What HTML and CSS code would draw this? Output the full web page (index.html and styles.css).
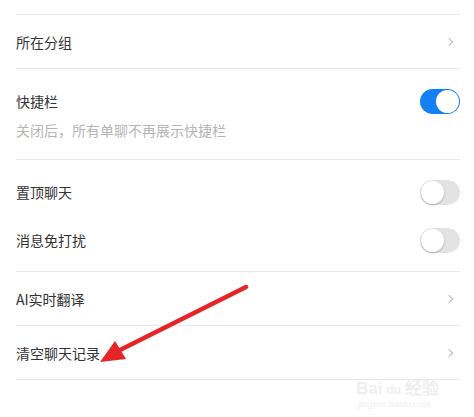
FILE: index.html
```html
<!DOCTYPE html>
<html lang="zh-CN">
	<head>
		<title>聊天设置</title>
		<link rel="stylesheet" href="styles.css">
	</head>
	<body>
		<div id="main">
			<div class="top"></div>
			<div class="row">
				<span class="label">所在分组</span>
				<span class="chev"></span>
			</div>
			<div class="block quick">
				<div class="line">
					<span class="label">快捷栏</span>
					<span class="switch on"></span>
				</div>
				<div class="note">关闭后，所有单聊不再展示快捷栏</div>
			</div>
			<div class="block pair">
				<div class="line tall">
					<span class="label">置顶聊天</span>
					<span class="switch"></span>
				</div>
				<div class="line tall">
					<span class="label">消息免打扰</span>
					<span class="switch"></span>
				</div>
			</div>
			<div class="row">
				<span class="label">AI实时翻译</span>
				<span class="chev"></span>
			</div>
			<div class="row">
				<span class="label">清空聊天记录</span>
				<span class="chev"></span>
			</div>
		</div>

		<!-- red arrow drawn over the screenshot -->
		<svg class="arrow" width="474" height="417" viewBox="0 0 474 417">
			<line x1="246" y1="287" x2="114" y2="353" stroke="#e5252a" stroke-width="4.5" stroke-linecap="round"/>
			<polygon points="100,362 115,341 126,359" fill="#e5252a"/>
		</svg>

		<div class="mark">
			<div class="mark-big">Bai<span class="du">du</span>经验</div>
			<div class="mark-small">jingyan.baidu.com</div>
		</div>
	</body>
</html>
```

FILE: styles.css
```css
body, html {
	margin:0;
	padding:0;
	background:#fff;
	font-family:"Noto Sans CJK SC","Noto Sans",sans-serif;
	color:#333;
}
#main {
	padding:0 14px 0 16px;
}
.top {
	height:14px;
	border-bottom:1px solid #e9e9e9;
}
.row {
	display:flex;
	align-items:center;
	justify-content:space-between;
	height:53px;
	border-bottom:1px solid #e9e9e9;
}
.label {
	font-size:14px;
	line-height:20px;
}
.chev {
	width:5px;
	height:5px;
	border-top:1px solid #bbb;
	border-right:1px solid #bbb;
	transform:rotate(45deg);
	margin-right:8px;
}
.block {
	border-bottom:1px solid #e9e9e9;
}
.quick {
	height:91px;
	box-sizing:border-box;
	padding-top:20px;
}
.line {
	display:flex;
	align-items:center;
	justify-content:space-between;
	height:24px;
}
.note {
	margin-top:7px;
	font-size:14px;
	line-height:20px;
	color:#b5b5b5;
}
.pair {
	height:112px;
	box-sizing:border-box;
	padding-top:8px;
}
.line.tall {
	height:48px;
}
.switch {
	position:relative;
	width:40px;
	height:25px;
	border-radius:13px;
	background:#e3e3e3;
	box-sizing:border-box;
}
.switch:after {
	content:"";
	position:absolute;
	top:1px;
	left:1px;
	width:23px;
	height:23px;
	border-radius:50%;
	background:#fff;
	box-shadow:0 1px 2px rgba(0,0,0,0.25);
}
.switch.on {
	background:#1580f4;
}
.switch.on:after {
	left:auto;
	right:1px;
	box-shadow:none;
}
.arrow {
	position:absolute;
	top:0;
	left:0;
}
.mark {
	position:absolute;
	left:356px;
	top:380px;
	color:#efefef;
	font-family:"Liberation Sans",sans-serif;
}
.mark-big {
	font-size:17px;
	line-height:18px;
	font-weight:bold;
}
.mark-big .du {
	font-size:12px;
	margin:0 4px;
}
.mark-small {
	font-size:9px;
	line-height:10px;
	margin-left:2px;
}
```
